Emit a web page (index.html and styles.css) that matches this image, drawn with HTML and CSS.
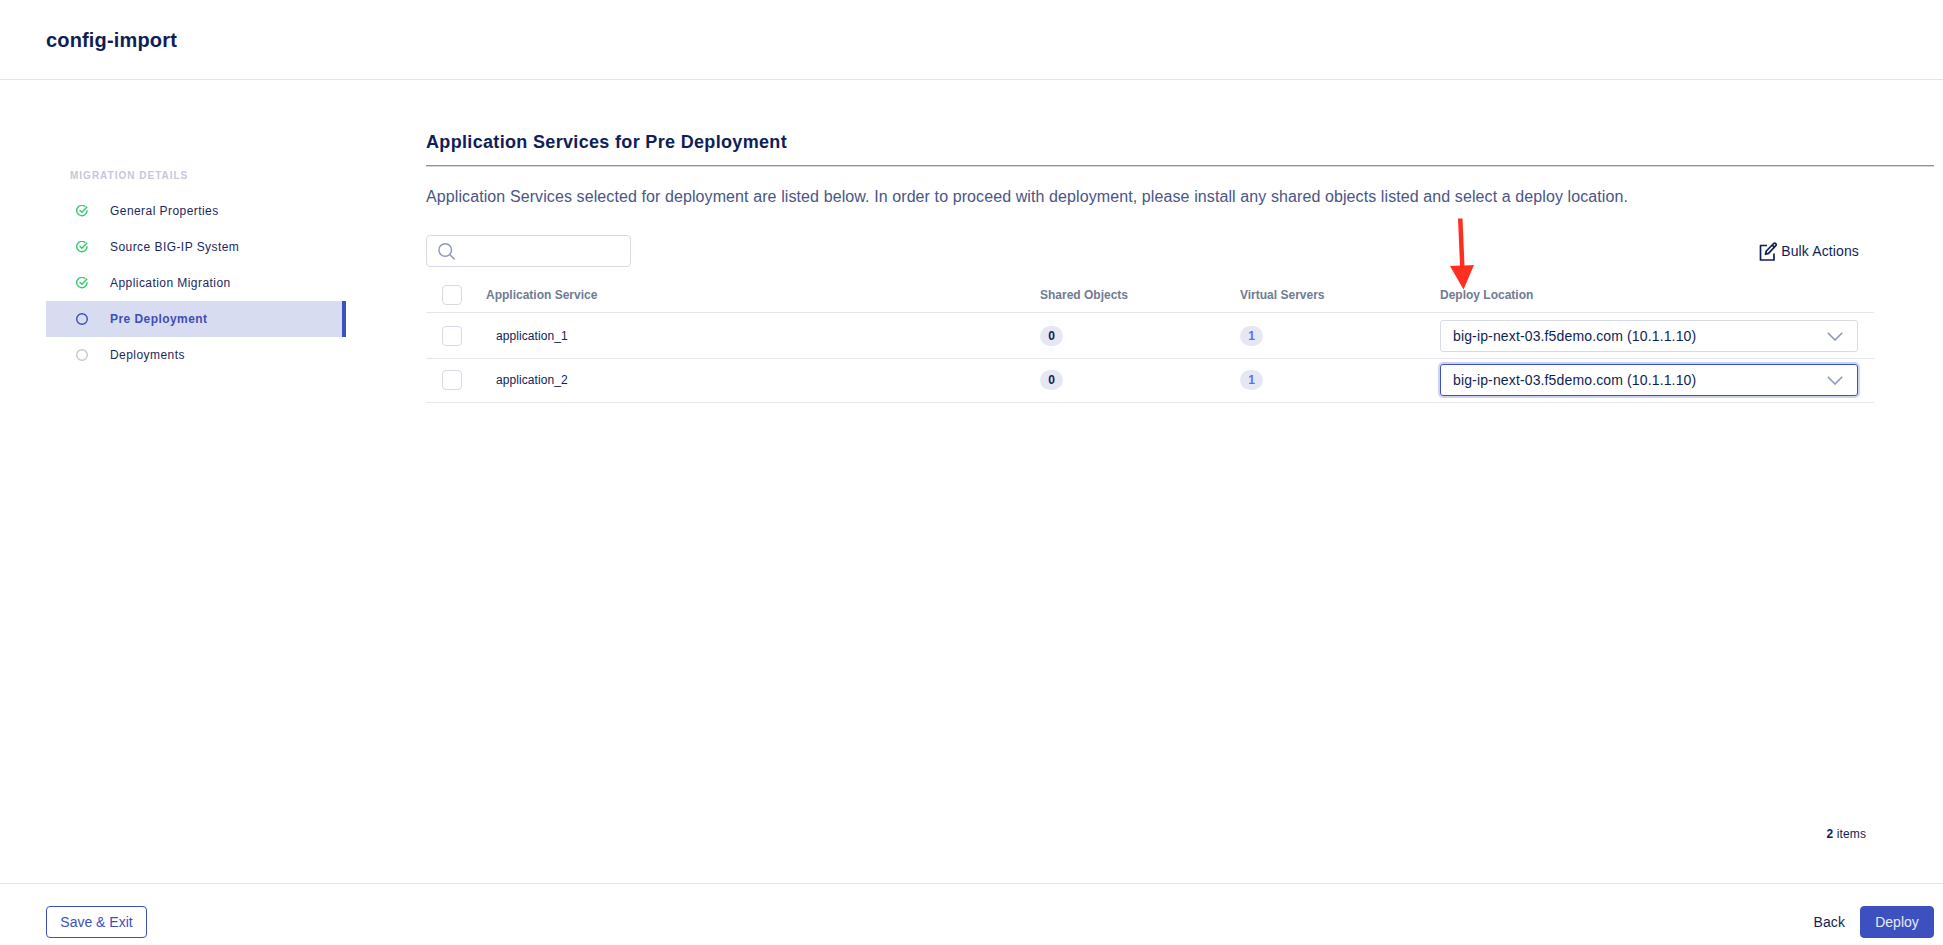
FILE: index.html
```html
<!DOCTYPE html>
<html lang="en">
<head>
<meta charset="utf-8">
<title>config-import</title>
<link rel="stylesheet" href="styles.css">
</head>
<body>
<svg class="defs" width="0" height="0" aria-hidden="true">
  <symbol id="done" viewBox="0 0 12 12"><path d="M9.4 1.7A5.2 5.2 0 1 0 11.1 5.3M3.6 5.1 5.9 7.3 11.2 1.7" fill="none" stroke="currentColor" stroke-width="1.4"/></symbol>
  <symbol id="ring" viewBox="0 0 12 12"><circle cx="6" cy="6" r="5.3" fill="none" stroke="currentColor" stroke-width="1.4"/></symbol>
  <symbol id="chevron" viewBox="0 0 16 9"><path d="M.8 .8 8 8 15.2 .8" fill="none" stroke="currentColor" stroke-width="1.6"/></symbol>
</svg>
<header class="topbar"><h1 class="title">config-import</h1></header>
<main class="body">
  <nav class="steps">
    <h2 class="steps-title">MIGRATION DETAILS</h2>
    <a class="step done"><svg class="step-icon"><use href="#done"/></svg><span>General Properties</span></a>
    <a class="step done"><svg class="step-icon"><use href="#done"/></svg><span>Source BIG-IP System</span></a>
    <a class="step done"><svg class="step-icon"><use href="#done"/></svg><span>Application Migration</span></a>
    <a class="step active"><svg class="step-icon"><use href="#ring"/></svg><span>Pre Deployment</span></a>
    <a class="step"><svg class="step-icon"><use href="#ring"/></svg><span>Deployments</span></a>
  </nav>
  <section class="content">
    <h2 class="heading">Application Services for Pre Deployment</h2>
    <p class="intro">Application Services selected for deployment are listed below. In order to proceed with deployment, please install any shared objects listed and select a deploy location.</p>
    <div class="toolbar">
      <div class="search"><svg width="17" height="17" viewBox="0 0 17 17"><g fill="none" stroke="currentColor" stroke-width="1.4"><circle cx="7.2" cy="7" r="6.3"/><path d="m11.6 11.4 5 5"/></g></svg></div>
      <div class="bulk"><svg width="19" height="19" viewBox="0 0 19 19"><g fill="none" stroke="currentColor" stroke-width="1.7" stroke-linejoin="round"><path d="M8 3.5H1.500V18H15v-6.500"/><path d="M6.500 12.300 7.300 9l7.400-7.500q1-.8 2 .1t.1 2L9.500 11.400zM13.300 3.200l2 2"/></g></svg><span>Bulk Actions</span></div>
    </div>
    <div class="table">
      <div class="row head"><i class="check"></i><span>Application Service</span><span>Shared Objects</span><span>Virtual Servers</span><span class="loc">Deploy Location
        <svg class="arrow" width="28" height="72" viewBox="0 0 28 72"><path d="M8 .5h4.500l2 47 9.500-.5L13.500 71.500 0 48l10-.5z" fill="#ff2f1f"/></svg></span></div>
      <div class="row first"><i class="check"></i><span class="name">application_1</span><b class="badge">0</b><b class="badge link">1</b><div class="select"><span>big-ip-next-03.f5demo.com (10.1.1.10)</span><svg class="chev"><use href="#chevron"/></svg></div></div>
      <div class="row"><i class="check"></i><span class="name">application_2</span><b class="badge">0</b><b class="badge link">1</b><div class="select focus"><span>big-ip-next-03.f5demo.com (10.1.1.10)</span><svg class="chev"><use href="#chevron"/></svg></div></div>
    </div>
    <div class="count"><b>2</b> items</div>
  </section>
</main>
<footer class="footer"><button class="btn outline">Save &amp; Exit</button><div class="actions"><span class="back">Back</span><button class="btn primary">Deploy</button></div></footer>
</body>
</html>
```
FILE: styles.css
```css
* { box-sizing: border-box; }
body { margin: 0; height: 945px; display: flex; flex-direction: column; overflow: hidden; background: #fff; color: #0f1e57; font: 14px/20px "Liberation Sans", Arial, sans-serif; }
h1, h2, p { margin: 0; }
.defs { position: absolute; }
.topbar { height: 80px; border-bottom: 1px solid #e2e3ef; padding: 28px 46px; flex: none; }
.title { font-size: 20px; line-height: 25px; letter-spacing: .16px; }
.body { flex: 1; display: flex; min-height: 0; }
.steps { width: 300px; margin-left: 46px; padding-top: 86px; flex: none; }
.steps-title { padding-left: 24px; margin-bottom: 7px; font-size: 10px; line-height: 20px; letter-spacing: 1px; color: #c5c8db; }
.step { height: 36px; display: flex; align-items: center; padding-left: 30px; gap: 22px; font-size: 12px; letter-spacing: .44px; color: #1b2860; }
.step-icon { width: 12px; height: 12px; color: #c5c8db; }
.done .step-icon { color: #36ca6e; }
.active { background: #d8dcf1; border-right: 4px solid #3d50c0; color: #3f4fb5; font-weight: bold; }
.active .step-icon { color: #3f4fb5; }
.content { flex: 1; margin: 0 9px 0 80px; display: flex; flex-direction: column; }
.heading { padding-top: 51px; height: 86px; border-bottom: 1px solid #8f919d; box-shadow: 0 1px #d6d7dd; font-size: 18px; line-height: 22px; letter-spacing: .33px; }
.intro { margin-top: 19px; font-size: 16px; line-height: 24px; letter-spacing: .097px; color: #4a5587; white-space: nowrap; }
.toolbar { margin: 26px 75px 0 0; display: flex; justify-content: space-between; height: 32px; }
.search { width: 205px; height: 32px; border: 1px solid #d8dae8; border-radius: 4px; padding: 7px 11px; color: #8f97b8; }
.search svg { display: block; }
.bulk { display: flex; align-items: center; gap: 3px; letter-spacing: .13px; }
.table { width: 1448px; margin-top: 4px; }
.row { display: grid; grid-template-columns: 60px 554px 200px 200px 418px; align-items: center; height: 44px; padding-bottom: 1px; border-bottom: 1px solid #e4e5ed; font-size: 12px; }
.row.head { height: 42px; padding: 7px 0 0; font-weight: bold; color: #707b94; }
.row.first { height: 46px; padding: 1px 0 0; }
.check { width: 20px; height: 20px; margin-left: 16px; border: 1px solid #d8dae8; border-radius: 4px; }
.name { padding-left: 10px; letter-spacing: .08px; }
.badge { width: 23px; height: 20px; border-radius: 10px; background: #e5e8f4; text-align: center; line-height: 20px; color: #14205a; }
.badge.link { color: #5872f2; }
.loc { position: relative; }
.arrow { position: absolute; left: 10px; top: -67px; }
.select { height: 32px; display: flex; align-items: center; justify-content: space-between; padding: 0 14px 0 12px; border: 1px solid #d8dae8; border-radius: 3px; font-size: 14px; letter-spacing: .14px; }
.focus { border-color: #3d50c0; box-shadow: 0 0 0 2px #cdd3f1; }
.chev { width: 16px; height: 9px; color: #8f97b8; }
.count { margin: auto 68px 39px 0; text-align: right; font-size: 12px; letter-spacing: .1px; }
.footer { flex: none; height: 62px; border-top: 1px solid #e2e3ef; padding: 22px 9px 0 46px; display: flex; justify-content: space-between; }
.actions { display: flex; gap: 15px; }
.back { line-height: 32px; letter-spacing: .1px; }
.btn { height: 32px; border: 1px solid #3d50c0; border-radius: 4px; font: 14px/20px "Liberation Sans", Arial, sans-serif; padding: 0; }
.outline { width: 101px; background: #fff; color: #3d50c0; }
.primary { width: 74px; background: #3d50c0; color: #e8ebfa; }
```
